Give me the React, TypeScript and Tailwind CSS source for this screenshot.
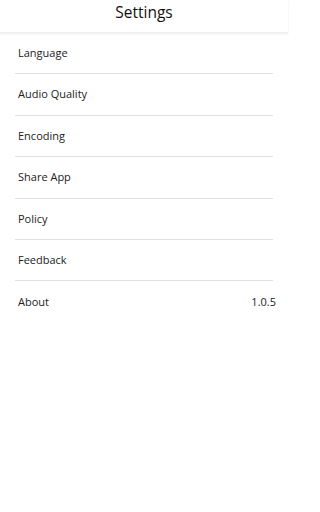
import React from "react";

const items = ["Language", "Audio Quality", "Encoding", "Share App", "Policy", "Feedback"];

export default function App() {
  return (
    <div className="w-[288px] h-[512px] bg-white" style={{ fontFamily: '"Open Sans", sans-serif' }}>
      <div className="h-[33px] flex justify-center bg-white shadow-[0_1px_2px_rgba(0,0,0,0.08)] border-b border-[#f0f0f0] relative z-10">
        <span className="text-[15.5px] leading-[22px] pt-[1px] text-[#111]">Settings</span>
      </div>
      <div>
        {items.map((t) => (
          <div key={t} className="h-[41.4px] ml-[15px] mr-[15px] border-b border-[#e0e0e0] flex items-center pl-[3px]">
            <span className="text-[11px] text-[#222]">{t}</span>
          </div>
        ))}
        <div className="h-[41.4px] ml-[15px] mr-[12px] flex items-center justify-between pl-[3px]">
          <span className="text-[11px] text-[#222]">About</span>
          <span className="text-[11px] text-[#222]">1.0.5</span>
        </div>
      </div>
    </div>
  );
}
